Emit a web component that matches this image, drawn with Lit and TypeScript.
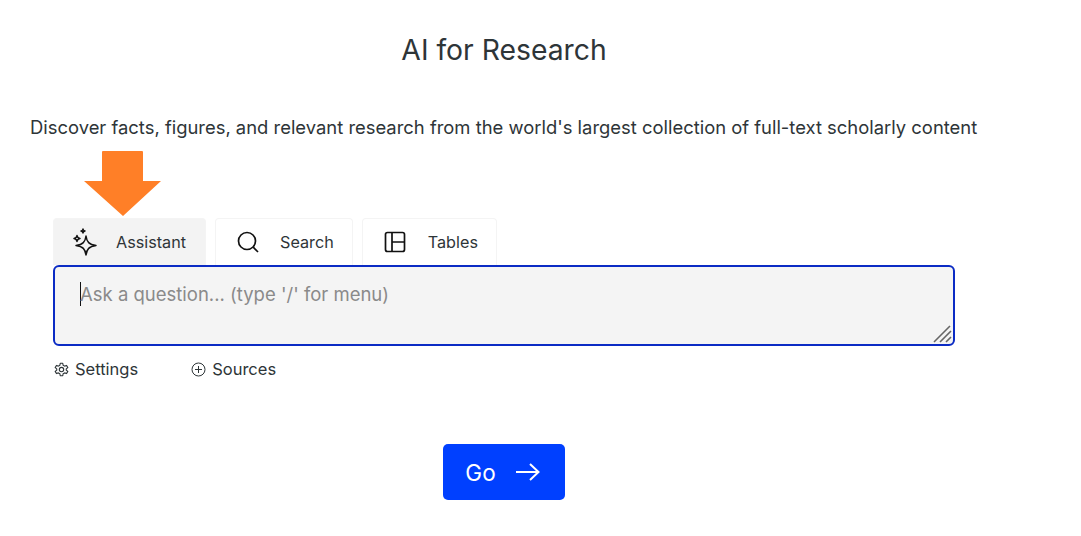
import { LitElement, html, css } from "lit";
import { customElement } from "lit/decorators.js";

@customElement("app-root")
export class AppRoot extends LitElement {
  static styles = css`
    :host {
      display: block;
      height: 536px;
      overflow: hidden;
      background: #fff;
      color: #2e3538;
      font-family: "Inter", "Liberation Sans", sans-serif;
    }
    .title {
      margin: 0;
      padding-top: 32px;
      width: 1008px;
      text-align: center;
      font-size: 28.3px;
      line-height: 36px;
      font-weight: 400;
    }
    .lead {
      margin: 0;
      padding: 47px 0 0 30px;
      font-size: 18.42px;
      line-height: 24px;
      white-space: nowrap;
    }
    .panel {
      position: relative;
      margin: 79px 0 0 53px;
      width: 902px;
    }
    .arrow {
      position: absolute;
      left: 31px;
      top: -67px;
      width: 77px;
      height: 65px;
    }
    .tabs {
      display: flex;
      gap: 9px;
    }
    .tab {
      display: flex;
      align-items: center;
      gap: 20px;
      height: 47px;
      box-sizing: border-box;
      padding: 0 18px 0 20px;
      border: 1px solid #f4f4f4;
      border-bottom: none;
      border-radius: 4px 4px 0 0;
      font-size: 16.2px;
    }
    .tab.active {
      background: #f3f3f3;
      gap: 19px;
      padding: 0 19px 0 18px;
    }
    .tab.wide-gap {
      gap: 21px;
      padding-right: 18px;
    }
    .input {
      position: relative;
      box-sizing: border-box;
      height: 81px;
      padding: 14px 0 0 25px;
      background: #f4f4f4;
      border: 2px solid #0b2bc4;
      border-radius: 6px;
      color: #8a8a8a;
      font-size: 18.5px;
      line-height: 26px;
    }
    .caret {
      display: inline-block;
      width: 1px;
      height: 24px;
      margin-top: 1px;
      margin-right: -1px;
      vertical-align: top;
      background: #111;
    }
    .resizer {
      position: absolute;
      right: 1px;
      bottom: 1px;
      width: 19px;
      height: 19px;
    }
    .options {
      display: flex;
      gap: 52px;
      margin-top: 12px;
      font-size: 16.5px;
      line-height: 22px;
    }
    .option {
      display: flex;
      align-items: center;
      gap: 6px;
      padding-left: 1px;
    }
    .actions {
      display: flex;
      justify-content: center;
      width: 1008px;
      margin-top: 64px;
    }
    .go {
      display: flex;
      align-items: center;
      justify-content: center;
      gap: 20px;
      width: 122px;
      height: 56px;
      padding: 0 3px 0 0;
      border: none;
      border-radius: 5px;
      background: #0040ff;
      color: #fff;
      font: inherit;
      font-size: 22.5px;
    }
    svg {
      display: block;
      flex: none;
    }
  `;

  render() {
    return html`
      <h1 class="title">AI for Research</h1>
      <p class="lead">
        Discover facts, figures, and relevant research from the world's largest
        collection of full-text scholarly content
      </p>
      <div class="panel">
        <svg class="arrow" viewBox="0 0 77 65">
          <path d="M18 1 Q18 0 19 0 H58 Q59 0 59 1 V30 H77 L39 65 L0 30 H18 Z" fill="#ff7f27" />
        </svg>
        <div class="tabs">
          <div class="tab active">
            <svg width="25" height="28" viewBox="0 0 25 28" fill="none" stroke="#111" stroke-width="1.5" stroke-linejoin="round">
              <path d="M14 8 C14.8 14 17 16.5 24 17.5 C17 18.5 14.8 21 14 27 C13.200 21 11 18.500 4 17.500 C11 16.500 13.200 14 14 8 Z" />
              <path d="M5 7.500 C5.300 9.500 6 10.200 8 10.500 C6 10.800 5.300 11.500 5 13.500 C4.700 11.500 4 10.800 2 10.500 C4 10.200 4.700 9.500 5 7.500 Z" />
              <path d="M11 1 C11.200 2.400 11.600 2.800 13 3 C11.600 3.200 11.200 3.600 11 5 C10.800 3.600 10.400 3.200 9 3 C10.400 2.800 10.800 2.400 11 1 Z" />
            </svg>
            <span>Assistant</span>
          </div>
          <div class="tab">
            <svg width="24" height="24" viewBox="0 0 24 24" fill="none" stroke="#111" stroke-width="1.700">
              <circle cx="11" cy="11" r="8.500" />
              <path d="M17.200 17.200 L22 22" />
            </svg>
            <span>Search</span>
          </div>
          <div class="tab wide-gap">
            <svg width="24" height="24" viewBox="0 0 24 24" fill="none" stroke="#111" stroke-width="1.700">
              <rect x="2.500" y="2.500" width="19" height="19" rx="2" />
              <path d="M9 2.500 V21.500 M9 12 H21.500" />
            </svg>
            <span>Tables</span>
          </div>
        </div>
        <div class="input">
          <span class="caret"></span>Ask a question... (type '/' for menu)
          <svg class="resizer" viewBox="0 0 19 19" stroke="#666" stroke-width="1.600">
            <path d="M1 18 L17 2 M7 18 L18 7 M13 18 L18 13" />
          </svg>
        </div>
        <div class="options">
          <div class="option">
            <svg width="15" height="15" viewBox="0 0 24 24" fill="none" stroke="#2e3538" stroke-width="1.800" stroke-linejoin="round">
              <circle cx="12" cy="12" r="3.500" />
              <path d="M10 2 H14 L14.600 5.200 L17 6.600 L20.100 5.500 L22.100 9 L19.600 11 V13 L22.100 15 L20.100 18.500 L17 17.400 L14.600 18.800 L14 22 H10 L9.400 18.800 L7 17.400 L3.900 18.500 L1.900 15 L4.400 13 V11 L1.900 9 L3.900 5.500 L7 6.600 L9.400 5.200 Z" />
            </svg>
            <span>Settings</span>
          </div>
          <div class="option">
            <svg width="15" height="15" viewBox="0 0 15 15" fill="none" stroke="#2e3538" stroke-width="1">
              <circle cx="7.500" cy="7.500" r="6.500" />
              <path d="M7.500 4 V11 M4 7.500 H11" />
            </svg>
            <span>Sources</span>
          </div>
        </div>
      </div>
      <div class="actions">
        <button class="go">
          <span>Go</span>
          <svg width="24" height="20" viewBox="0 0 24 20" fill="none" stroke="#fff" stroke-width="2">
            <path d="M0 10 H22 M14 2 L22.500 10 L14 18" />
          </svg>
        </button>
      </div>
    `;
  }
}
